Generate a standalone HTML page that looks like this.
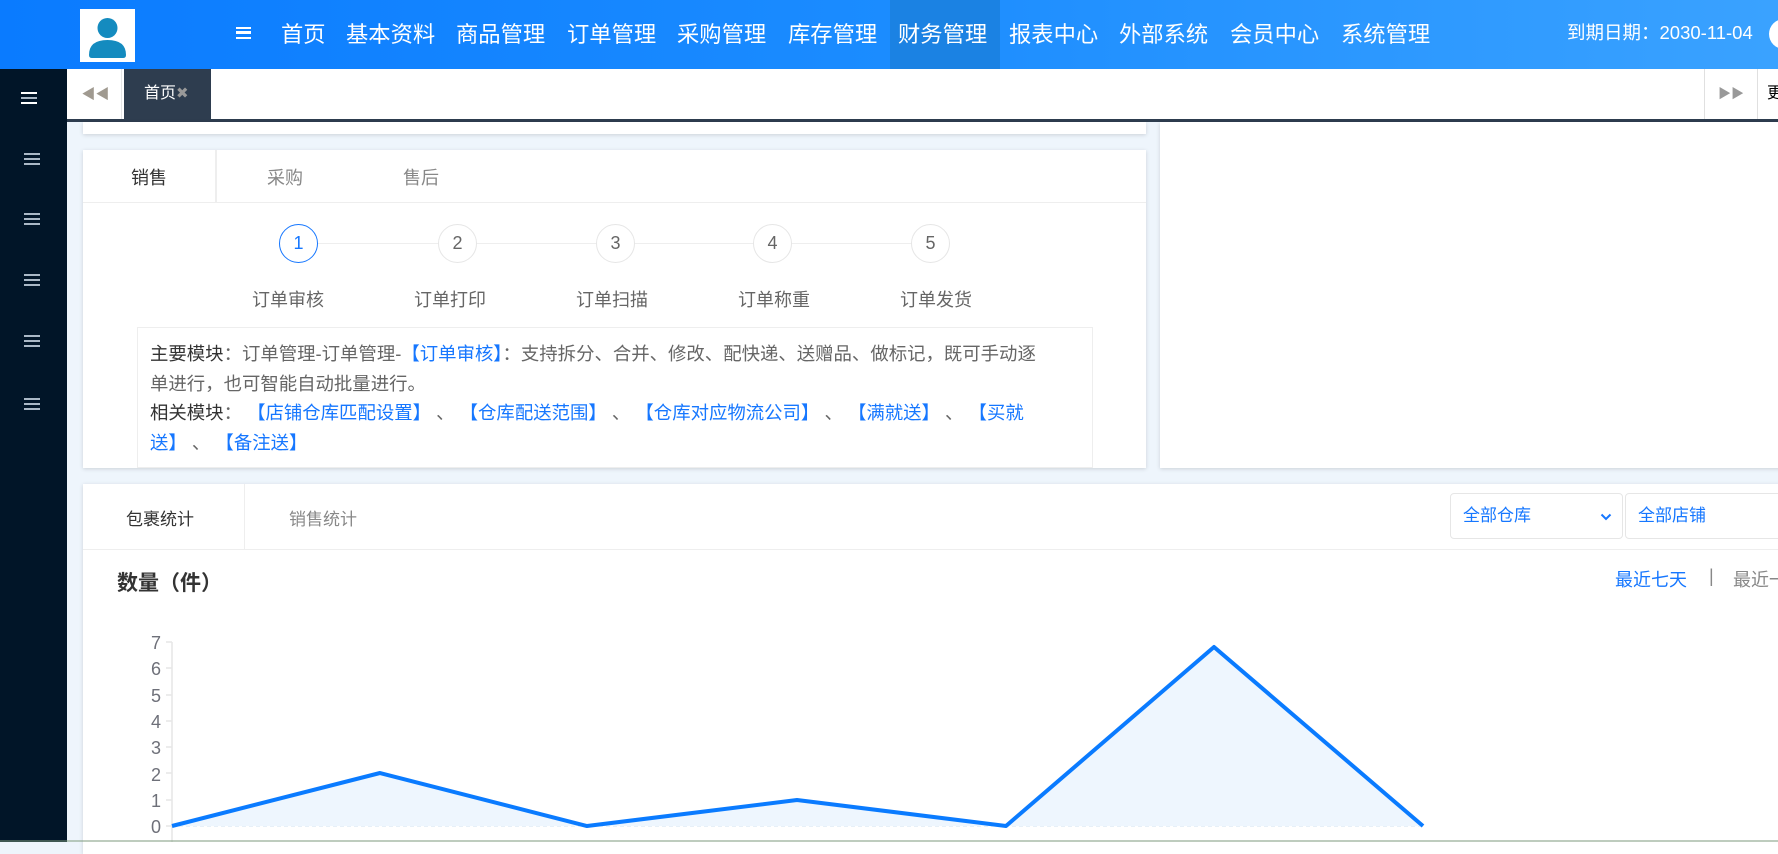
<!DOCTYPE html>
<html><head><meta charset="utf-8"><style>
*{margin:0;padding:0;box-sizing:border-box}
body{width:1778px;height:842px;overflow:hidden;position:relative;background:#eef5fc;font-family:"Liberation Sans","Noto Sans CJK SC",sans-serif;}
.top{position:absolute;left:0;top:0;width:1778px;height:69px;background:linear-gradient(90deg,#0a7bff 0%,#1b8cff 50%,#3aa2ff 100%);color:#fff}
.logo{position:absolute;left:80px;top:9px;width:55px;height:53px;background:#fff}
.nav{position:absolute;top:0;height:69px;line-height:69px;font-size:22.3px;}
.nav span{position:absolute;white-space:nowrap}
.hl{position:absolute;left:890px;top:0;width:110px;height:69px;background:#1b82e3}
.side{position:absolute;left:0;top:69px;width:67px;height:773px;background:#011528}
.ham{position:absolute;left:24px;width:16px;height:12px;border-top:2.5px solid #aab8c6;border-bottom:2.5px solid #aab8c6}
.ham:after{content:"";position:absolute;left:0;top:2.5px;width:16px;height:2.5px;background:#aab8c6}
.tabbar{position:absolute;left:67px;top:69px;width:1711px;height:53px;background:#fff;border-bottom:3px solid #2e3d4f}
.card{position:absolute;background:#fff;box-shadow:0 1px 4px rgba(0,0,0,.15)}
.t{position:absolute;white-space:nowrap}
.circ{position:absolute;width:39px;height:39px;border-radius:50%;border:1px solid #e6e6e6;text-align:center;line-height:37px;font-size:18px;color:#666;background:#fff}
.blue{color:#1677ff}
.info div{white-space:nowrap}
</style></head><body>
<div class="top">
 <div class="logo"><svg width="55" height="53" viewBox="0 0 55 53"><circle cx="27.5" cy="19" r="10" fill="#148bbf"/><path d="M9 46 Q9 31 27.5 31 Q46 31 46 46 Q46 49 43 49 L12 49 Q9 49 9 46Z" fill="#148bbf"/></svg></div>
 <div style="position:absolute;left:236px;top:27px;width:15px;height:12px;border-top:2.5px solid #fff;border-bottom:2.5px solid #fff"><div style="position:absolute;top:2.3px;width:15px;height:2.5px;background:#fff"></div></div>
 <div class="hl"></div>
 <div class="nav" style="left:0;width:1778px">
  <span style="left:281px">首页</span><span style="left:346px">基本资料</span><span style="left:456px">商品管理</span><span style="left:567px">订单管理</span><span style="left:677px">采购管理</span><span style="left:788px">库存管理</span><span style="left:898px">财务管理</span><span style="left:1009px">报表中心</span><span style="left:1119px">外部系统</span><span style="left:1230px">会员中心</span><span style="left:1341px">系统管理</span>
 </div>
 <div class="t" style="left:1567px;top:21px;font-size:18.5px;line-height:24px">到期日期：2030-11-04</div>
 <div style="position:absolute;left:1769px;top:19px;width:30px;height:30px;border-radius:50%;background:#fff"></div>
</div>
<div class="side">
 <div class="ham" style="top:23px;border-color:#fff;left:21px"></div>
 <div class="ham" style="top:84px"></div><div class="ham" style="top:144px"></div><div class="ham" style="top:205px"></div><div class="ham" style="top:266px"></div><div class="ham" style="top:329px"></div>
</div>
<div class="tabbar">
 <div style="position:absolute;left:3px;top:0;width:52px;height:50px;border-right:1px solid #e5e5e5;color:#a09a90;font-size:14px;text-align:center;line-height:50px">◀◀</div>
 <div style="position:absolute;left:57px;top:0;width:87px;height:50px;background:#2e3d4f;color:#fff;font-size:16px;line-height:50px;padding-left:20px">首页<span style="color:#999;font-size:15px">✖</span></div>
 <div style="position:absolute;left:1637px;top:0;width:54px;height:50px;border-left:1px solid #e0e0e0;border-right:1px solid #e0e0e0;color:#999;font-size:13px;text-align:center;line-height:50px">▶▶</div>
 <div style="position:absolute;left:1700px;top:0;font-size:16px;line-height:50px">更</div>
</div>
<div class="card" style="left:83px;top:122px;width:1063px;height:12px"></div>
<div class="card" style="left:1160px;top:122px;width:640px;height:346px"></div>
<div class="card" style="left:83px;top:150px;width:1063px;height:318px">
 <div style="position:absolute;left:0;top:52px;width:1063px;height:1px;background:#eee"></div>
 <div style="position:absolute;left:132px;top:0;width:2px;height:52px;background:#eee"></div>
 <div class="t" style="left:48px;top:14px;font-size:18px;color:#333">销售</div>
 <div class="t" style="left:184px;top:14px;font-size:18px;color:#888">采购</div>
 <div class="t" style="left:320px;top:14px;font-size:18px;color:#888">售后</div>
 <div style="position:absolute;left:215px;top:93px;width:632px;height:1px;background:#eee"></div>
 <div class="circ" style="left:196px;top:74px;border-color:#1677ff;color:#1677ff">1</div>
 <div class="circ" style="left:355px;top:74px">2</div>
 <div class="circ" style="left:513px;top:74px">3</div>
 <div class="circ" style="left:670px;top:74px">4</div>
 <div class="circ" style="left:828px;top:74px">5</div>
 <div class="t" style="left:169px;top:136px;font-size:18px;color:#666">订单审核</div>
 <div class="t" style="left:331px;top:136px;font-size:18px;color:#666">订单打印</div>
 <div class="t" style="left:493px;top:136px;font-size:18px;color:#666">订单扫描</div>
 <div class="t" style="left:655px;top:136px;font-size:18px;color:#666">订单称重</div>
 <div class="t" style="left:817px;top:136px;font-size:18px;color:#666">订单发货</div>
 <div class="info" style="position:absolute;left:54px;top:177px;width:956px;height:141px;border:1px solid #eee;padding:11px 12px;font-size:18.4px;line-height:29.5px;color:#666">
  <div><span style="color:#333">主要模块</span>：订单管理-订单管理-<span class="blue">【订单审核】</span>：支持拆分、合并、修改、配快递、送赠品、做标记，既可手动逐</div>
  <div>单进行，也可智能自动批量进行。</div>
  <div><span style="color:#333">相关模块</span>： <span class="blue">【店铺仓库匹配设置】</span> 、 <span class="blue">【仓库配送范围】</span> 、 <span class="blue">【仓库对应物流公司】</span> 、 <span class="blue">【满就送】</span> 、 <span class="blue">【买就</span></div>
  <div><span class="blue">送】</span> 、 <span class="blue">【备注送】</span></div>
 </div>
</div>
<div class="card" style="left:83px;top:484px;width:1720px;height:370px">
 <div style="position:absolute;left:0;top:65px;width:1720px;height:1px;background:#eee"></div>
 <div style="position:absolute;left:161px;top:0;width:1px;height:65px;background:#eee"></div>
 <div class="t" style="left:43px;top:21px;font-size:17px;color:#333">包裹统计</div>
 <div class="t" style="left:206px;top:21px;font-size:17px;color:#888">销售统计</div>
 <div style="position:absolute;left:1367px;top:9px;width:173px;height:46px;border:1px solid #e6e6e6;border-radius:4px;font-size:17px;line-height:44px;padding-left:12px;color:#1677ff">全部仓库<svg style="position:absolute;right:10px;top:19px" width="12" height="8" viewBox="0 0 12 8"><path d="M1.5 1.5 L6 6 L10.5 1.5" fill="none" stroke="#1677ff" stroke-width="2"/></svg></div>
 <div style="position:absolute;left:1542px;top:9px;width:200px;height:46px;border:1px solid #e6e6e6;border-radius:4px;font-size:17px;line-height:44px;padding-left:12px;color:#1677ff">全部店铺</div>
 <div class="t" style="left:34px;top:83px;font-size:21px;font-weight:bold;color:#333">数量（件）</div>
 <div class="t" style="left:1532px;top:82px;font-size:18px;color:#1677ff">最近七天</div>
 <div class="t" style="left:1626px;top:82px;font-size:18px;color:#888">|</div>
 <div class="t" style="left:1650px;top:82px;font-size:18px;color:#888">最近一</div>
</div>
<svg style="position:absolute;left:0;top:0" width="1778" height="842">
 <g font-size="18" fill="#6e7079" font-family="Liberation Sans,sans-serif" text-anchor="end">
  <text x="161" y="649">7</text><text x="161" y="675">6</text><text x="161" y="702">5</text><text x="161" y="728">4</text><text x="161" y="754">3</text><text x="161" y="781">2</text><text x="161" y="807">1</text><text x="161" y="833">0</text>
 </g>
 <g stroke="#e6e6e6" stroke-width="1.5">
  <line x1="172" y1="642" x2="172" y2="842"/>
  <line x1="166" y1="642" x2="172" y2="642"/><line x1="166" y1="668" x2="172" y2="668"/><line x1="166" y1="695" x2="172" y2="695"/><line x1="166" y1="721" x2="172" y2="721"/><line x1="166" y1="747" x2="172" y2="747"/><line x1="166" y1="773" x2="172" y2="773"/><line x1="166" y1="800" x2="172" y2="800"/><line x1="166" y1="826" x2="172" y2="826"/>
 </g>
 <line x1="172" y1="826" x2="1423" y2="826" stroke="#cfe0f0" stroke-dasharray="4,3"/>
 <polygon points="172,826 380,773 587,826 797,800 1006,826 1214,647 1423,826" fill="#eef6fe"/>
 <polyline points="172,826 380,773 587,826 797,800 1006,826 1214,647 1423,826" fill="none" stroke="#0a7bff" stroke-width="4" stroke-linejoin="round"/>
 <line x1="0" y1="841" x2="1778" y2="841" stroke="#7d9a7d"/>
</svg>
</body></html>
